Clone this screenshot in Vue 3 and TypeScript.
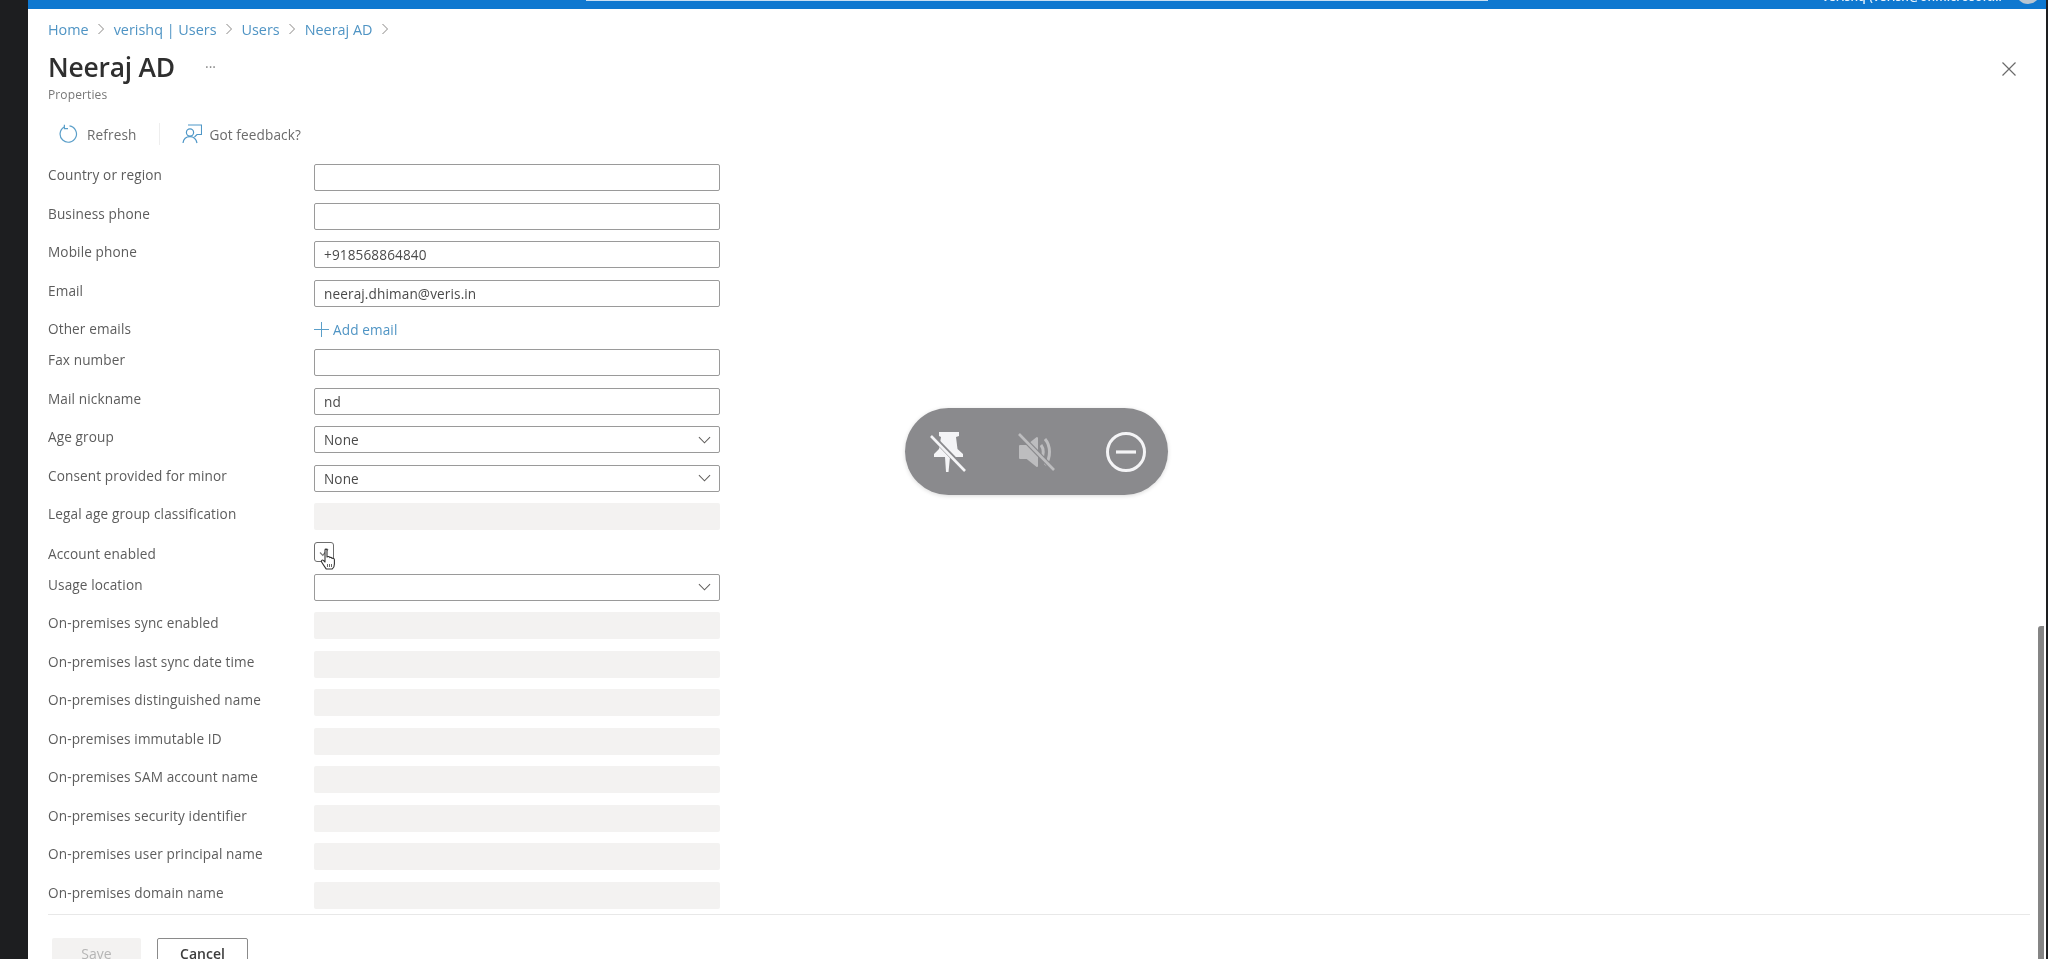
<template>
  <div class="page">
    <div class="side"></div>
    <div class="main">
      <header class="topbar">
        <div class="search"></div>
        <div class="account">
          <span class="account-name">verishq (verish@onmicrosoft...</span>
          <span class="avatar"></span>
        </div>
      </header>

      <div class="content">
        <nav class="crumbs">
          <template v-for="c in crumbs" :key="c">
            <a>{{ c }}</a>
            <svg class="sep" width="8" height="12" viewBox="0 0 8 12"><path d="M1.5 1 L6.5 6 L1.5 11" fill="none" stroke="#8a8886" stroke-width="1" /></svg>
          </template>
        </nav>

        <div class="title-row">
          <div>
            <div class="title-line">
              <h1>Neeraj AD</h1>
              <span class="more">···</span>
            </div>
            <div class="subtitle">Properties</div>
          </div>
          <svg class="close" width="16" height="16" viewBox="0 0 16 16"><path d="M1.5 1.5 L14.5 14.5 M14.5 1.5 L1.5 14.5" stroke="#6b6b6b" stroke-width="1.2" fill="none" /></svg>
        </div>

        <div class="toolbar">
          <button class="tool">
            <svg width="20" height="20" viewBox="0 0 20 20"><path d="M6.2 2.9 A8.2 8.2 0 1 0 11.5 1.9" fill="none" stroke="#5b9fc9" stroke-width="1.2" /><path d="M6.4 0.8 L6.4 4.6 L10 4.6" fill="none" stroke="#5b9fc9" stroke-width="1.2" /></svg>
            <span>Refresh</span>
          </button>
          <span class="divider"></span>
          <button class="tool">
            <svg width="20" height="20" viewBox="0 0 20 20">
              <circle cx="8" cy="8.5" r="3.6" fill="none" stroke="#4f97c7" stroke-width="1.2" />
              <path d="M1 19 C1.6 14.5 4.5 12.6 8 12.6 C11.5 12.6 14 14.5 15 19" fill="none" stroke="#4f97c7" stroke-width="1.2" />
              <path d="M6 1 H19.5 V10.5 H15 L12.5 13" fill="none" stroke="#4f97c7" stroke-width="1.1" />
            </svg>
            <span>Got feedback?</span>
          </button>
        </div>

        <form class="form" @submit.prevent>
          <div v-for="r in rows" :key="r.label" class="row" :class="'row-' + r.kind">
            <label>{{ r.label }}</label>

            <div v-if="r.kind === 'text'" class="field">{{ r.value }}</div>
            <div v-else-if="r.kind === 'select'" class="field">
              <span>{{ r.value }}</span>
              <svg class="chev" width="14" height="8" viewBox="0 0 14 8"><path d="M1 1 L7 7 L13 1" fill="none" stroke="#605e5c" stroke-width="1.1" /></svg>
            </div>
            <div v-else-if="r.kind === 'disabled'" class="field disabled"></div>
            <a v-else-if="r.kind === 'add'" class="add">
              <svg width="15" height="15" viewBox="0 0 15 15"><path d="M7.5 0 V15 M0 7.5 H15" stroke="#5b9fc9" stroke-width="1" /></svg>
              <span>Add email</span>
            </a>
            <div v-else class="check-wrap">
              <div class="check">
                <svg width="14" height="14" viewBox="0 0 14 14"><path d="M3 7.5 L5.8 10.3 L11 4" fill="none" stroke="#777" stroke-width="1.2" /></svg>
              </div>
              <svg class="cursor" width="17" height="22" viewBox="0 0 17 22">
                <path d="M5 2 C5 0.8 7 0.8 7 2 V9 L8.2 8.6 C9.4 8.4 9.8 9.2 9.8 9.6 C11 9 12 9.6 12 10.4 C13.2 10 14.4 10.6 14.4 11.8 V16 C14.4 18.4 13 20.5 12.2 21 H6.2 C5.4 19.8 3.4 17 1.6 14 C0.8 12.6 2.2 11.4 3.4 12.4 L5 14 Z" fill="#fff" stroke="#333" stroke-width="1.1" stroke-linejoin="round" />
                <path d="M7.5 16 V19 M9.5 16 V19 M11.5 16 V19" stroke="#555" stroke-width="0.9" />
              </svg>
            </div>
          </div>
        </form>

        <footer class="footer">
          <button class="btn save">Save</button>
          <button class="btn cancel">Cancel</button>
        </footer>
      </div>

      <div class="scrollbar"></div>

      <div class="pill">
        <svg width="36" height="42" viewBox="0 0 36 42">
          <path d="M9 1 H29 V5 L26 6 L27.5 18 L33 23 V26 H20 L18.5 41 H16 L15 26 H4 V23 L9 18 L11 6 L9 5 Z" fill="#f4f4f6" />
          <path d="M1 4 L35 39" stroke="#8a8a8d" stroke-width="5" />
          <path d="M1 5 L35 40" stroke="#f4f4f6" stroke-width="2.6" />
        </svg>
        <svg width="40" height="42" viewBox="0 0 40 42">
          <path d="M4 15 H11 L21 7 V35 L11 27 H4 Z" fill="#bdbdbf" stroke="#bdbdbf" stroke-width="2" stroke-linejoin="round" />
          <path d="M25 14 C28 18 28 24 25 28 M29 8 C35 15 35 27 29 34" fill="none" stroke="#bdbdbf" stroke-width="3" />
          <path d="M3 3 L38 39" stroke="#8a8a8d" stroke-width="5" />
          <path d="M3 3 L38 39" stroke="#bdbdbf" stroke-width="2.6" />
        </svg>
        <svg width="42" height="42" viewBox="0 0 42 42">
          <circle cx="21" cy="21" r="18.5" fill="none" stroke="#f4f4f6" stroke-width="3" />
          <path d="M11 21 H31" stroke="#f4f4f6" stroke-width="3.2" />
        </svg>
      </div>
    </div>
  </div>
</template>

<script setup lang="ts">
type Row = {
  label: string;
  kind: "text" | "select" | "disabled" | "add" | "check";
  value?: string;
};

const crumbs = ["Home", "verishq | Users", "Users", "Neeraj AD"];

const rows: Row[] = [
  { label: "Country or region", kind: "text" },
  { label: "Business phone", kind: "text" },
  { label: "Mobile phone", kind: "text", value: "+918568864840" },
  { label: "Email", kind: "text", value: "neeraj.dhiman@veris.in" },
  { label: "Other emails", kind: "add" },
  { label: "Fax number", kind: "text" },
  { label: "Mail nickname", kind: "text", value: "nd" },
  { label: "Age group", kind: "select", value: "None" },
  { label: "Consent provided for minor", kind: "select", value: "None" },
  { label: "Legal age group classification", kind: "disabled" },
  { label: "Account enabled", kind: "check" },
  { label: "Usage location", kind: "select" },
  { label: "On-premises sync enabled", kind: "disabled" },
  { label: "On-premises last sync date time", kind: "disabled" },
  { label: "On-premises distinguished name", kind: "disabled" },
  { label: "On-premises immutable ID", kind: "disabled" },
  { label: "On-premises SAM account name", kind: "disabled" },
  { label: "On-premises security identifier", kind: "disabled" },
  { label: "On-premises user principal name", kind: "disabled" },
  { label: "On-premises domain name", kind: "disabled" },
];
</script>

<style>
html,
body {
  margin: 0;
  background: #fff;
  overflow: hidden;
}
</style>

<style scoped>
.page {
  display: flex;
  width: 2048px;
  height: 959px;
  overflow: hidden;
  background: #1d1e20;
  font-family: "Open Sans", "Noto Sans", sans-serif;
  font-size: 13.6px;
  letter-spacing: 0.12px;
  color: #4d4d4d;
  filter: blur(0.6px);
}

.side {
  width: 28px;
  flex: none;
}

.main {
  position: relative;
  width: 2018px;
  background: #fff;
  display: flex;
  flex-direction: column;
}

.topbar {
  height: 9px;
  flex: none;
  background: #0f78d0;
  position: relative;
  display: flex;
  justify-content: flex-end;
  overflow: hidden;
}

.search {
  position: absolute;
  left: 558px;
  top: 0;
  width: 902px;
  height: 1px;
  background: #c8dff3;
}

.account {
  display: flex;
  align-items: flex-end;
  gap: 14px;
  padding-right: 6px;
  height: 4px;
}

.account-name {
  color: #e8f2fb;
  font-size: 12px;
  line-height: 14px;
  font-weight: 600;
  white-space: nowrap;
}

.avatar {
  width: 24px;
  height: 24px;
  border-radius: 50%;
  background: #b9c6d2;
  flex: none;
}

.content {
  padding: 0 20px;
}

.crumbs {
  display: flex;
  align-items: center;
  gap: 8.5px;
  height: 30px;
  margin-top: 5px;
  font-size: 14.4px;
  letter-spacing: 0;
  color: #4f94c4;
}

.title-row {
  display: flex;
  justify-content: space-between;
  align-items: flex-start;
  margin-top: 5.5px;
}

.title-line {
  display: flex;
  align-items: center;
  gap: 30px;
  height: 34px;
}

h1 {
  margin: 0;
  font-size: 26.4px;
  font-weight: 600;
  color: #2f2f2f;
  letter-spacing: -0.2px;
}

.more {
  color: #8a8a8a;
  font-size: 14px;
  letter-spacing: 0;
}

.subtitle {
  font-size: 12px;
  color: #777;
  line-height: 16px;
  margin-top: 3px;
}

.close {
  margin: 11px 9px 0 0;
}

.toolbar {
  display: flex;
  align-items: center;
  height: 36px;
  margin-top: 13.5px;
  margin-bottom: 12px;
}

.tool {
  display: flex;
  align-items: center;
  gap: 9px;
  border: 0;
  background: none;
  padding: 0 0 0 10px;
  font: inherit;
  letter-spacing: inherit;
  color: #6b6b6b;
}

.tool + .divider + .tool {
  gap: 7px;
}

.divider {
  width: 1px;
  height: 22px;
  background: #eee;
  margin: 0 12px 0 23px;
}

.form {
  width: 672px;
}

.row {
  display: flex;
  height: 38.5px;
}

.row-add {
  height: 31px;
}

.row-check {
  height: 32px;
}

.row:last-child {
  height: 32px;
}

.row label {
  width: 266px;
  flex: none;
  line-height: 21px;
  color: #5c5c5c;
}

.field {
  flex: 1;
  height: 27px;
  box-sizing: border-box;
  border: 1.5px solid #9a9a9a;
  border-radius: 2px;
  padding: 0 8px 0 9px;
  display: flex;
  align-items: center;
  justify-content: space-between;
  color: #4a4a4a;
}

.field.disabled {
  background: #f3f2f1;
  border: 0;
}

.chev {
  width: 13px;
}

.row-disabled label {
  line-height: 22px;
}

.row-add label {
  line-height: 22px;
}

.add {
  display: flex;
  align-items: center;
  gap: 4px;
  color: #4f94c4;
  height: 22px;
}

.check-wrap {
  position: relative;
}

.check {
  width: 20px;
  height: 20px;
  box-sizing: border-box;
  border: 1.5px solid #6e6e6e;
  border-radius: 3px;
  display: flex;
  align-items: center;
  justify-content: center;
}

.cursor {
  position: absolute;
  left: 6px;
  top: 6px;
}

.row-check label {
  line-height: 24px;
}

.footer {
  border-top: 1px solid #e8e8e8;
  padding: 23px 0 0 4px;
  width: 1978px;
  display: flex;
  gap: 16px;
}

.btn {
  height: 32px;
  font: inherit;
  font-size: 14px;
  border-radius: 2px;
}

.save {
  width: 89px;
  border: 0;
  background: #f3f2f1;
  color: #b5b5b5;
}

.cancel {
  width: 91px;
  border: 1.5px solid #8a8a8a;
  background: #fff;
  color: #3d3d3d;
  font-weight: 600;
}

.scrollbar {
  position: absolute;
  right: 2px;
  top: 626px;
  bottom: 0;
  width: 6px;
  background: #858585;
  border-radius: 3px 0 0 0;
}

.pill {
  position: absolute;
  left: 877px;
  top: 408px;
  width: 263px;
  height: 87px;
  box-sizing: border-box;
  border-radius: 44px;
  background: #8a8a8d;
  box-shadow: 0 1px 4px rgba(0, 0, 0, 0.15);
  display: flex;
  align-items: center;
  gap: 49.5px;
  padding-left: 25px;
}
</style>
